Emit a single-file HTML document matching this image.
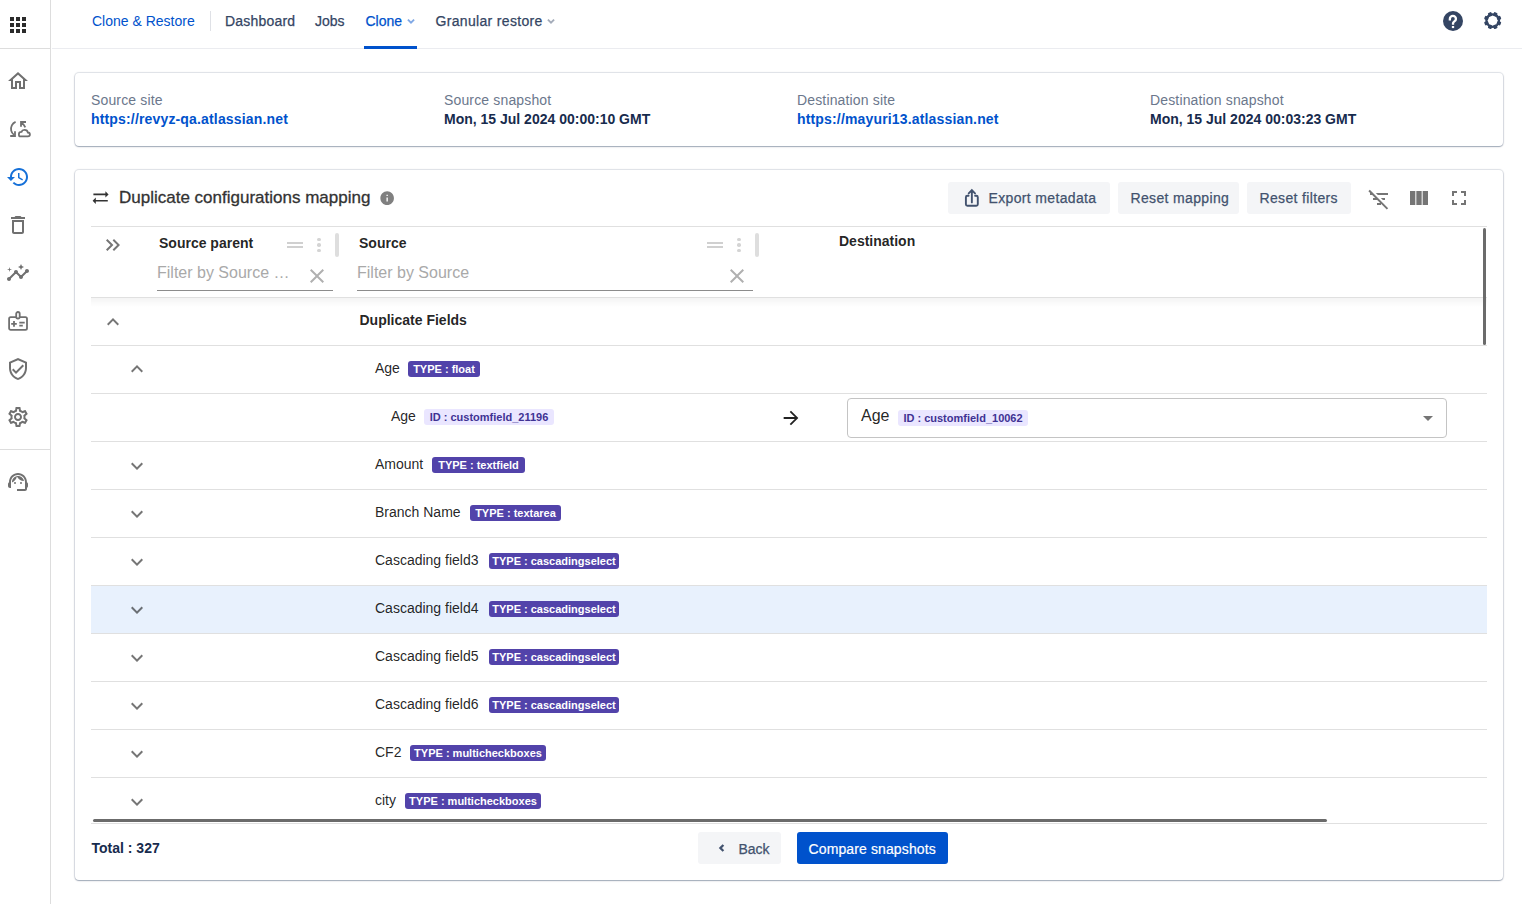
<!DOCTYPE html><html><head><meta charset="utf-8"><style>
*{box-sizing:border-box;margin:0;padding:0}
html,body{width:1522px;height:905px;overflow:hidden;background:#fff;font-family:"Liberation Sans",sans-serif}
body{position:relative}
.a{position:absolute;white-space:nowrap}
svg{position:absolute;display:block;overflow:visible}
.nt{font-size:14px;line-height:14px;color:#344563;-webkit-text-stroke:.25px}
.card{position:absolute;background:#fff;border-radius:4px;box-shadow:rgba(9,30,66,.25) 0 1px 1px,rgba(9,30,66,.13) 0 0 1px 1px,rgba(9,30,66,.06) 0 1px 3px}
.lbl{font-size:14px;line-height:14px;color:#6b778c;letter-spacing:.15px}
.val{font-size:14px;line-height:14px;font-weight:bold;color:#172b4d}
.lnk{color:#0052cc;letter-spacing:.16px}
.btn{position:absolute;height:32px;background:#f4f5f7;border-radius:3px}
.bt{font-size:14px;line-height:14px;color:#42526e;letter-spacing:.35px;-webkit-text-stroke:.25px}
.row{position:absolute;left:91px;width:1396px;height:48px;border-bottom:1px solid #e0e0e0}
.ct{font-size:14px;line-height:14px;color:rgba(0,0,0,.87)}
.bdg{position:absolute;height:16px;border-radius:3px;background:#5243aa;color:#fff;font-size:11px;font-weight:bold;line-height:16px;padding:0;text-align:center;white-space:nowrap}
.bdgl{background:#eae6ff;color:#403294}
.ic{fill:#757575}
</style></head><body>
<div class="a" style="left:50px;top:0;width:1px;height:904px;background:#ddd"></div>
<div class="a" style="left:0;top:48px;width:50px;height:1px;background:#ddd"></div>
<div class="a" style="left:0;top:449px;width:50px;height:1px;background:#ddd"></div>
<svg style="left:10px;top:17px" width="16" height="16" fill="#2b2b2b"><rect x="0" y="0" width="4" height="4"/><rect x="0" y="6" width="4" height="4"/><rect x="0" y="12" width="4" height="4"/><rect x="6" y="0" width="4" height="4"/><rect x="6" y="6" width="4" height="4"/><rect x="6" y="12" width="4" height="4"/><rect x="12" y="0" width="4" height="4"/><rect x="12" y="6" width="4" height="4"/><rect x="12" y="12" width="4" height="4"/></svg>
<svg style="left:5.5px;top:69.3px" width="24" height="24" viewBox="0 0 24 24" fill="#707070"><path d="M12 5.69l5 4.5V18h-2v-6H9v6H7v-7.81l5-4.5M12 3L2 12h3v8h6v-6h2v6h6v-8h3L12 3z"/></svg>
<svg style="left:9px;top:120px" width="22" height="18" viewBox="0 0 22 18" fill="none" stroke="#707070" stroke-width="1.8"><path d="M6.6 1.8 C3.2 3.2 1.4 7 2.2 10.6 C2.6 12.4 3.6 13.8 5 14.8"/><path d="M1.2 16 H6 V11.2" stroke-linejoin="miter"/><path d="M10.6 16.3 H18.9 C20.2 16.3 20.9 15.5 20.9 14.5 C20.9 13.4 20 12.6 18.8 12.5 C18.6 10.8 17.3 9.9 15.4 9.9 C14 9.9 12.9 10.7 12.5 11.9 C10.8 11.9 9.9 13 9.9 14.2 C9.9 15.4 10.3 16.3 10.6 16.3 Z"/><path d="M16.3 7.4 C15.6 5.6 14.2 4 12.6 2.8 M12 6.8 V2 H17" stroke-linejoin="miter"/></svg>
<svg style="left:5.6px;top:165.3px" width="24" height="24" viewBox="0 0 24 24" fill="#1570d8"><path d="M13 3c-4.97 0-9 4.03-9 9H1l3.89 3.89.07.14L9 12H6c0-3.87 3.13-7 7-7s7 3.13 7 7-3.13 7-7 7c-1.93 0-3.68-.79-4.94-2.06l-1.42 1.42C8.27 19.99 10.51 21 13 21c4.97 0 9-4.03 9-9s-4.03-9-9-9zm-1 5v5l4.28 2.54.72-1.21-3.5-2.08V8H12z"/></svg>
<svg style="left:5.8px;top:213px" width="24" height="24" viewBox="0 0 24 24" fill="#707070"><path d="M16 9v10H8V9h8m-1.5-6h-5l-1 1H5v2h14V4h-3.5l-1-1zM18 7H6v12c0 1.1.9 2 2 2h8c1.1 0 2-.9 2-2V7z"/></svg>
<svg style="left:6px;top:261px" width="24" height="24" viewBox="0 0 24 24" fill="#707070"><path d="M21 8c-1.45 0-2.26 1.44-1.93 2.51l-3.55 3.56c-.3-.09-.74-.09-1.04 0l-2.55-2.55C12.27 10.45 11.46 9 10 9c-1.45 0-2.27 1.44-1.93 2.52l-4.56 4.55C2.44 15.74 1 16.55 1 18c0 1.1.9 2 2 2 1.45 0 2.26-1.44 1.93-2.51l4.55-4.56c.3.09.74.09 1.04 0l2.55 2.55C12.73 16.55 13.54 18 15 18c1.45 0 2.27-1.44 1.93-2.52l3.56-3.55c1.07.33 2.51-.48 2.51-1.93 0-1.1-.9-2-2-2zM15 9l.94-2.07L18 6l-2.06-.93L15 3l-.92 2.07L12 6l2.08.93zM3.5 11L4 9l2-.5L4 8l-.5-2L3 8l-2 .5L3 9z"/></svg>
<svg style="left:8px;top:311px" width="20" height="20" viewBox="0 0 20 20" fill="none" stroke="#707070" stroke-width="1.8"><rect x="1.1" y="6.1" width="17.9" height="12.8" rx="1.6"/><rect x="8.2" y="1" width="3.5" height="6.5" rx="1.75" fill="#fff"/><path d="M3.2 12.9 H8.8 M6 10.1 V15.7 M11.3 11.6 H16.7 M11.3 14.7 H14.8"/></svg>
<svg style="left:5.8px;top:356.7px" width="24" height="24" viewBox="0 0 24 24" fill="#707070"><path d="M12 1L3 5v6c0 5.55 3.84 10.74 9 12 5.16-1.26 9-6.45 9-12V5l-9-4zm7 10c0 4.52-2.98 8.69-7 9.93-4.02-1.24-7-5.41-7-9.93V6.3l7-3.11 7 3.11V11zm-11.59.59L6 13l4 4 8-8-1.41-1.42L10 14.17z"/></svg>
<svg style="left:6px;top:405px" width="24" height="24" viewBox="0 0 24 24" fill="#707070"><path d="M19.43 12.98c.04-.32.07-.64.07-.98 0-.34-.03-.66-.07-.98l2.11-1.65c.19-.15.24-.42.12-.64l-2-3.46c-.09-.16-.26-.25-.44-.25-.06 0-.12.01-.17.03l-2.49 1c-.52-.4-1.08-.73-1.69-.98l-.38-2.65C14.46 2.18 14.25 2 14 2h-4c-.25 0-.46.18-.49.42l-.38 2.65c-.61.25-1.17.59-1.69.98l-2.49-1c-.06-.02-.12-.03-.18-.03-.17 0-.34.09-.43.25l-2 3.46c-.13.22-.07.49.12.64l2.11 1.65c-.04.32-.07.65-.07.98 0 .33.03.66.07.98l-2.11 1.65c-.19.15-.24.42-.12.64l2 3.46c.09.16.26.25.44.25.06 0 .12-.01.17-.03l2.49-1c.52.4 1.08.73 1.69.98l.38 2.65c.03.24.24.42.49.42h4c.25 0 .46-.18.49-.42l.38-2.65c.61-.25 1.17-.59 1.69-.98l2.49 1c.06.02.12.03.18.03.17 0 .34-.09.43-.25l2-3.46c.12-.22.07-.49-.12-.64l-2.11-1.65zm-1.98-1.71c.04.31.05.52.05.73 0 .21-.02.43-.05.73l-.14 1.13.89.7 1.08.84-.7 1.21-1.27-.51-1.04-.42-.9.68c-.43.32-.84.56-1.25.73l-1.06.43-.16 1.13-.2 1.35h-1.4l-.19-1.35-.16-1.13-1.06-.43c-.43-.18-.83-.41-1.23-.71l-.91-.7-1.06.43-1.27.51-.7-1.21 1.08-.84.89-.7-.14-1.13c-.03-.31-.05-.54-.05-.74s.02-.43.05-.73l.14-1.13-.89-.7-1.08-.84.7-1.21 1.27.51 1.04.42.9-.68c.43-.32.84-.56 1.25-.73l1.06-.43.16-1.13.2-1.35h1.39l.19 1.35.16 1.13 1.06.43c.43.18.83.41 1.23.71l.91.7 1.06-.43 1.27-.51.7 1.21-1.07.85-.89.7.14 1.13zM12 8c-2.21 0-4 1.79-4 4s1.79 4 4 4 4-1.79 4-4-1.79-4-4-4zm0 6c-1.1 0-2-.9-2-2s.9-2 2-2 2 .9 2 2-.9 2-2 2z"/></svg>
<svg style="left:6px;top:469.7px" width="24" height="24" viewBox="0 0 24 24" fill="#707070"><path d="M21 12.22C21 6.73 16.74 3 12 3c-4.69 0-9 3.65-9 9.28-.6.34-1 .98-1 1.72v2c0 1.1.9 2 2 2h1v-6.1c0-3.87 3.13-7 7-7s7 3.13 7 7V19h-8v2h8c1.1 0 2-.9 2-2v-1.22c.59-.31 1-.92 1-1.64v-2.3c0-.7-.41-1.31-1-1.62zM9 12a1 1 0 1 0 0 2 1 1 0 1 0 0-2zM15 12a1 1 0 1 0 0 2 1 1 0 1 0 0-2zM18 11.03C17.52 8.18 15.04 6 12.05 6c-3.03 0-6.29 2.51-6.03 6.45 2.47-1.01 4.33-3.21 4.86-5.89 1.31 2.63 4 4.44 7.12 4.47z"/></svg>
<div class="a" style="left:52px;top:48px;width:1470px;height:1px;background:#ebecf0"></div>
<div class="a nt" style="left:92px;top:14px;color:#0052cc;-webkit-text-stroke:0">Clone &amp; Restore</div>
<div class="a" style="left:210px;top:11px;width:1px;height:20px;background:#dfe1e6"></div>
<div class="a nt" style="left:225px;top:14px;letter-spacing:.2px">Dashboard</div>
<div class="a nt" style="left:315px;top:14px">Jobs</div>
<div class="a nt" style="left:365.5px;top:14px;color:#0052cc">Clone</div>
<svg style="left:406px;top:17px" width="10" height="8" fill="none" stroke="#0052cc" stroke-opacity=".5" stroke-width="1.8"><path d="M1.9 2.6 L5 5.7 L8.1 2.6"/></svg>
<div class="a" style="left:364px;top:46px;width:53px;height:3px;background:#0052cc"></div>
<div class="a nt" style="left:435.5px;top:14px;letter-spacing:.33px">Granular restore</div>
<svg style="left:546px;top:17px" width="10" height="8" fill="none" stroke="#344563" stroke-opacity=".45" stroke-width="1.8"><path d="M1.9 2.6 L5 5.7 L8.1 2.6"/></svg>
<svg style="left:1443px;top:11px" width="20" height="20" viewBox="0 0 20 20"><circle cx="10" cy="10" r="10" fill="#344563"/><path d="M6.85 9.4 V7.9 A3.05 3.05 0 0 1 12.95 7.9 C12.95 9.3 12 10 11.1 10.6 C10.4 11.1 10.05 11.5 10.05 12.3 V13.7" fill="none" stroke="#fff" stroke-width="2.3"/><rect x="8.85" y="15" width="2.3" height="2.1" fill="#fff"/></svg>
<svg style="left:1484px;top:12px" width="18" height="18" viewBox="-8.7 -8.6 18 18" fill="#344563"><rect x="-1.9" y="-8.7" width="3.8" height="4" rx="1" transform="rotate(22.5)"/><rect x="-1.9" y="-8.7" width="3.8" height="4" rx="1" transform="rotate(67.5)"/><rect x="-1.9" y="-8.7" width="3.8" height="4" rx="1" transform="rotate(112.5)"/><rect x="-1.9" y="-8.7" width="3.8" height="4" rx="1" transform="rotate(157.5)"/><rect x="-1.9" y="-8.7" width="3.8" height="4" rx="1" transform="rotate(202.5)"/><rect x="-1.9" y="-8.7" width="3.8" height="4" rx="1" transform="rotate(247.5)"/><rect x="-1.9" y="-8.7" width="3.8" height="4" rx="1" transform="rotate(292.5)"/><rect x="-1.9" y="-8.7" width="3.8" height="4" rx="1" transform="rotate(337.5)"/><circle cx="0" cy="0" r="6.3" fill="none" stroke="#344563" stroke-width="2.2"/></svg>
<div class="card" style="left:75px;top:73px;width:1428px;height:73px"></div>
<div class="a lbl" style="left:91px;top:93px">Source site</div>
<div class="a val lnk" style="left:91px;top:112px">https://revyz-qa.atlassian.net</div>
<div class="a lbl" style="left:444px;top:93px">Source snapshot</div>
<div class="a val" style="left:444px;top:112px">Mon, 15 Jul 2024 00:00:10 GMT</div>
<div class="a lbl" style="left:797px;top:93px">Destination site</div>
<div class="a val lnk" style="left:797px;top:112px">https://mayuri13.atlassian.net</div>
<div class="a lbl" style="left:1150px;top:93px">Destination snapshot</div>
<div class="a val" style="left:1150px;top:112px">Mon, 15 Jul 2024 00:03:23 GMT</div>
<div class="card" style="left:75px;top:170px;width:1428px;height:710px"></div>
<svg style="left:91.4px;top:188.1px" width="19.2" height="19.2" viewBox="0 0 24 24" fill="#333"><path d="M22 8l-4-4v3H3v2h15v3l4-4zM2 16l4 4v-3h15v-2H6v-3l-4 4z"/></svg>
<div class="a" style="left:119px;top:189px;font-size:17px;line-height:17px;color:#333;-webkit-text-stroke:.3px">Duplicate configurations mapping</div>
<svg style="left:378.8px;top:189.5px" width="16.3" height="16.3" viewBox="0 0 24 24" fill="#808080"><path d="M12 2C6.48 2 2 6.48 2 12s4.48 10 10 10 10-4.48 10-10S17.52 2 12 2zm1 15h-2v-6h2v6zm0-8h-2V7h2v2z"/></svg>
<div class="btn" style="left:948px;top:182px;width:162px"></div>
<div class="a bt" style="left:988.5px;top:191px">Export metadata</div>
<svg style="left:960px;top:186px" width="24" height="24" viewBox="0 0 24 24" fill="none" stroke="#42526e" stroke-width="2"><path stroke-linecap="round" stroke-width="1.9" d="M8.6 9.7 H7.4 C6.5 9.7 5.9 10.3 5.9 11.2 V18.3 C5.9 19.2 6.5 19.8 7.4 19.8 H16.3 C17.2 19.8 17.8 19.2 17.8 18.3 V11.2 C17.8 10.3 17.2 9.7 16.3 9.7 H15.1 M11.85 16.4 V4.4 M8.7 7.4 L11.85 4.2 L15 7.4"/></svg>
<div class="btn" style="left:1118px;top:182px;width:121px"></div>
<div class="a bt" style="left:1130.5px;top:191px">Reset mapping</div>
<div class="btn" style="left:1247px;top:182px;width:104px"></div>
<div class="a bt" style="left:1259.5px;top:191px">Reset filters</div>
<svg style="left:1366.5px;top:187px" width="24" height="24" viewBox="0 0 24 24" fill="#757575"><path d="M10.83 8H21V6H8.83l2 2zm5 5H18v-2h-4.17l2 2zM14 16.83V18h-4v-2h3.17l-3-3H6v-2h2.17l-3-3H3V6h.17L1.39 4.22 2.8 2.81l18.38 18.38-1.41 1.41L14 16.83z"/></svg>
<svg style="left:1407px;top:186px" width="24" height="24" viewBox="0 0 24 24" fill="#757575"><path d="M14.67 5v14H9.33V5h5.34zm1 14H21V5h-5.33v14zm-7.34 0V5H3v14h5.33z"/></svg>
<svg style="left:1447px;top:186px" width="24" height="24" viewBox="0 0 24 24" fill="#757575"><path d="M7 14H5v5h5v-2H7v-3zm-2-4h2V7h3V5H5v5zm12 7h-3v2h5v-5h-2v3zM14 5v2h3v3h2V5h-5z"/></svg>
<div class="a" style="left:91px;top:226px;width:1396px;height:1px;background:#e0e0e0"></div>
<div class="a" style="left:91px;top:297px;width:1396px;height:1px;background:#e0e0e0"></div>
<div class="a" style="left:91px;top:298px;width:1396px;height:9px;background:linear-gradient(rgba(0,0,0,.045),rgba(0,0,0,0))"></div>
<svg style="left:101px;top:233px" width="24" height="24" viewBox="0 0 24 24" fill="#757575"><path d="M6.41 6L5 7.41 9.58 12 5 16.59 6.41 18l6-6zM13 6l-1.41 1.41L16.17 12l-4.58 4.59L13 18l6-6z"/></svg>
<div class="a ct" style="left:159px;top:236px;font-weight:bold">Source parent</div>
<div class="a ct" style="left:359px;top:236px;font-weight:bold">Source</div>
<div class="a ct" style="left:839px;top:234px;font-weight:bold">Destination</div>
<div class="a" style="left:287px;top:242px;width:16px;height:2px;background:#d0d0d0"></div>
<div class="a" style="left:287px;top:246px;width:16px;height:2px;background:#d0d0d0"></div>
<div class="a" style="left:317.2px;top:237.79999999999998px;width:3.6px;height:3.6px;border-radius:50%;background:#d4d4d4"></div>
<div class="a" style="left:317.2px;top:243.2px;width:3.6px;height:3.6px;border-radius:50%;background:#d4d4d4"></div>
<div class="a" style="left:317.2px;top:248.6px;width:3.6px;height:3.6px;border-radius:50%;background:#d4d4d4"></div>
<div class="a" style="left:335px;top:233px;width:4px;height:24px;border-radius:2px;background:#dedede"></div>
<div class="a" style="left:707px;top:242px;width:16px;height:2px;background:#d0d0d0"></div>
<div class="a" style="left:707px;top:246px;width:16px;height:2px;background:#d0d0d0"></div>
<div class="a" style="left:737.2px;top:237.79999999999998px;width:3.6px;height:3.6px;border-radius:50%;background:#d4d4d4"></div>
<div class="a" style="left:737.2px;top:243.2px;width:3.6px;height:3.6px;border-radius:50%;background:#d4d4d4"></div>
<div class="a" style="left:737.2px;top:248.6px;width:3.6px;height:3.6px;border-radius:50%;background:#d4d4d4"></div>
<div class="a" style="left:755px;top:233px;width:4px;height:24px;border-radius:2px;background:#dedede"></div>
<div class="a" style="left:157px;top:265px;font-size:16px;line-height:16px;color:#a9a9a9">Filter by Source …</div>
<div class="a" style="left:357px;top:265px;font-size:16px;line-height:16px;color:#a9a9a9">Filter by Source</div>
<div class="a" style="left:157px;top:290px;width:176px;height:1px;background:#8c8c8c"></div>
<div class="a" style="left:357px;top:290px;width:396px;height:1px;background:#8c8c8c"></div>
<svg style="left:310px;top:268.5px" width="14" height="14" viewBox="5 5 14 14" fill="#b0b0b0"><path d="M19 6.41L17.59 5 12 10.59 6.41 5 5 6.41 10.59 12 5 17.59 6.41 19 12 13.41 17.59 19 19 17.59 13.41 12z"/></svg>
<svg style="left:730px;top:268.5px" width="14" height="14" viewBox="5 5 14 14" fill="#b0b0b0"><path d="M19 6.41L17.59 5 12 10.59 6.41 5 5 6.41 10.59 12 5 17.59 6.41 19 12 13.41 17.59 19 19 17.59 13.41 12z"/></svg>
<div class="row" style="top:298px"></div>
<svg style="left:103px;top:312px" width="20" height="20" viewBox="2 2 20 20" fill="rgba(0,0,0,.54)"><path d="M12 8l-6 6 1.41 1.41L12 10.83l4.59 4.58L18 14z"/></svg>
<div class="a ct" style="left:359.5px;top:313px;font-weight:bold">Duplicate Fields</div>
<div class="row" style="top:346px;"></div>
<svg style="left:127px;top:359px" width="20" height="20" viewBox="2 2 20 20" fill="rgba(0,0,0,.54)"><path d="M12 8l-6 6 1.41 1.41L12 10.83l4.59 4.58L18 14z"/></svg>
<div class="a ct" style="left:375px;top:361px">Age</div>
<div class="bdg" style="left:408px;top:361px;width:72px">TYPE : float</div>
<div class="row" style="top:394px;"></div>
<div class="a ct" style="left:391px;top:409px">Age</div>
<div class="bdg bdgl" style="left:424px;width:130px;top:409px">ID : customfield_21196</div>
<svg style="left:780.1px;top:407.3px" width="22" height="22" viewBox="0 0 24 24" fill="#222"><path d="M12 4l-1.41 1.41L16.17 11H4v2h12.17l-5.58 5.59L12 20l8-8z"/></svg>
<div class="a" style="left:847px;top:398px;width:600px;height:40px;border:1px solid #c4c4c4;border-radius:4px"></div>
<div class="a" style="left:861px;top:408px;font-size:16px;line-height:16px;color:rgba(0,0,0,.87)">Age</div>
<div class="bdg bdgl" style="left:898px;width:130px;top:410px">ID : customfield_10062</div>
<svg style="left:1416px;top:406px" width="24" height="24" viewBox="0 0 24 24" fill="#757575"><path d="M7 10l5 5 5-5z"/></svg>
<div class="row" style="top:442px;"></div>
<svg style="left:127px;top:456px" width="20" height="20" viewBox="2 2 20 20" fill="rgba(0,0,0,.54)"><path d="M16.59 8.59L12 13.17 7.41 8.59 6 10l6 6 6-6z"/></svg>
<div class="a ct" style="left:375px;top:457px">Amount</div>
<div class="bdg" style="left:432px;top:457px;width:93px">TYPE : textfield</div>
<div class="row" style="top:490px;"></div>
<svg style="left:127px;top:504px" width="20" height="20" viewBox="2 2 20 20" fill="rgba(0,0,0,.54)"><path d="M16.59 8.59L12 13.17 7.41 8.59 6 10l6 6 6-6z"/></svg>
<div class="a ct" style="left:375px;top:505px">Branch Name</div>
<div class="bdg" style="left:470px;top:505px;width:91px">TYPE : textarea</div>
<div class="row" style="top:538px;"></div>
<svg style="left:127px;top:552px" width="20" height="20" viewBox="2 2 20 20" fill="rgba(0,0,0,.54)"><path d="M16.59 8.59L12 13.17 7.41 8.59 6 10l6 6 6-6z"/></svg>
<div class="a ct" style="left:375px;top:553px">Cascading field3</div>
<div class="bdg" style="left:489px;top:553px;width:130px">TYPE : cascadingselect</div>
<div class="row" style="top:586px;background:#e8f1fd;"></div>
<svg style="left:127px;top:600px" width="20" height="20" viewBox="2 2 20 20" fill="rgba(0,0,0,.54)"><path d="M16.59 8.59L12 13.17 7.41 8.59 6 10l6 6 6-6z"/></svg>
<div class="a ct" style="left:375px;top:601px">Cascading field4</div>
<div class="bdg" style="left:489px;top:601px;width:130px">TYPE : cascadingselect</div>
<div class="row" style="top:634px;"></div>
<svg style="left:127px;top:648px" width="20" height="20" viewBox="2 2 20 20" fill="rgba(0,0,0,.54)"><path d="M16.59 8.59L12 13.17 7.41 8.59 6 10l6 6 6-6z"/></svg>
<div class="a ct" style="left:375px;top:649px">Cascading field5</div>
<div class="bdg" style="left:489px;top:649px;width:130px">TYPE : cascadingselect</div>
<div class="row" style="top:682px;"></div>
<svg style="left:127px;top:696px" width="20" height="20" viewBox="2 2 20 20" fill="rgba(0,0,0,.54)"><path d="M16.59 8.59L12 13.17 7.41 8.59 6 10l6 6 6-6z"/></svg>
<div class="a ct" style="left:375px;top:697px">Cascading field6</div>
<div class="bdg" style="left:489px;top:697px;width:130px">TYPE : cascadingselect</div>
<div class="row" style="top:730px;"></div>
<svg style="left:127px;top:744px" width="20" height="20" viewBox="2 2 20 20" fill="rgba(0,0,0,.54)"><path d="M16.59 8.59L12 13.17 7.41 8.59 6 10l6 6 6-6z"/></svg>
<div class="a ct" style="left:375px;top:745px">CF2</div>
<div class="bdg" style="left:410px;top:745px;width:136px">TYPE : multicheckboxes</div>
<div class="row" style="top:778px;"></div>
<svg style="left:127px;top:792px" width="20" height="20" viewBox="2 2 20 20" fill="rgba(0,0,0,.54)"><path d="M16.59 8.59L12 13.17 7.41 8.59 6 10l6 6 6-6z"/></svg>
<div class="a ct" style="left:375px;top:793px">city</div>
<div class="bdg" style="left:405px;top:793px;width:136px">TYPE : multicheckboxes</div>
<div class="a" style="left:76px;top:824px;width:1426px;height:55px;background:#fff"></div>
<div class="a" style="left:93px;top:819px;width:1234px;height:3px;border-radius:2px;background:#6b6b6b"></div>
<div class="a" style="left:91px;top:823px;width:1396px;height:1px;background:#e0e0e0"></div>
<div class="a" style="left:1483px;top:228px;width:3px;height:117px;border-radius:2px;background:#6b6b6b"></div>
<div class="a" style="left:91.5px;top:841px;font-size:14px;line-height:14px;font-weight:bold;color:#172b4d">Total : 327</div>
<div class="btn" style="left:698px;top:832px;width:83px"></div>
<svg style="left:714px;top:840px" width="16" height="16" viewBox="0 0 16 16" fill="none" stroke="#42526e" stroke-width="2.3"><path d="M9.4 5 6.4 8l3 3"/></svg>
<div class="a bt" style="left:738.5px;top:842px;letter-spacing:0">Back</div>
<div class="a" style="left:797px;top:832px;width:151px;height:32px;background:#0052cc;border-radius:3px"></div>
<div class="a" style="left:808.5px;top:842px;font-size:14px;line-height:14px;color:#fff;letter-spacing:.12px;-webkit-text-stroke:.2px #fff">Compare snapshots</div>
</body></html>
